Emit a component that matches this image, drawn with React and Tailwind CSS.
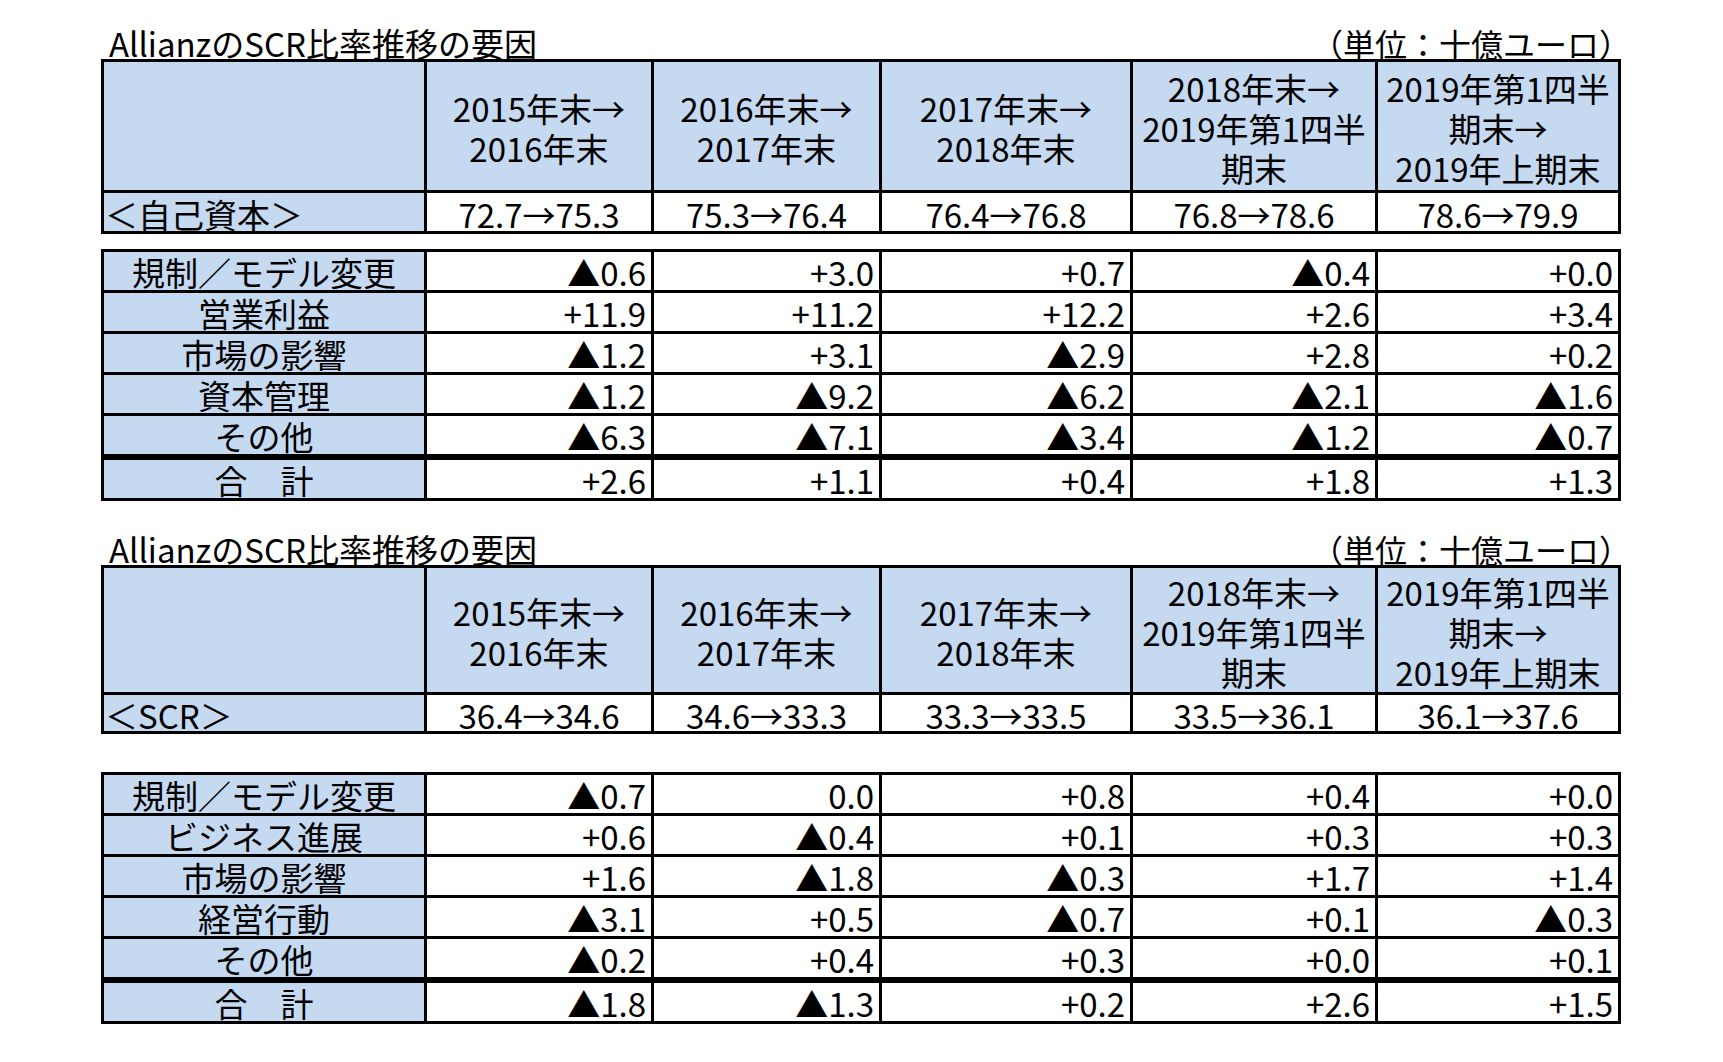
import React from "react";

const COLS =
  "grid grid-cols-[320px_224px_225px_248px_242px_240px] gap-[3px] bg-black p-[3px] w-[1520px]";
const BLUE = "bg-[#c5d9f1]";

const HEADERS = [
  ["2015年末→", "2016年末"],
  ["2016年末→", "2017年末"],
  ["2017年末→", "2018年末"],
  ["2018年末→", "2019年第1四半", "期末"],
  ["2019年第1四半", "期末→", "2019年上期末"],
];

const capital = {
  label: "＜自己資本＞",
  values: ["72.7→75.3", "75.3→76.4", "76.4→76.8", "76.8→78.6", "78.6→79.9"],
};

const scr = {
  label: "＜SCR＞",
  values: ["36.4→34.6", "34.6→33.3", "33.3→33.5", "33.5→36.1", "36.1→37.6"],
};

const capitalFactors = [
  ["規制／モデル変更", "▲0.6", "+3.0", "+0.7", "▲0.4", "+0.0"],
  ["営業利益", "+11.9", "+11.2", "+12.2", "+2.6", "+3.4"],
  ["市場の影響", "▲1.2", "+3.1", "▲2.9", "+2.8", "+0.2"],
  ["資本管理", "▲1.2", "▲9.2", "▲6.2", "▲2.1", "▲1.6"],
  ["その他", "▲6.3", "▲7.1", "▲3.4", "▲1.2", "▲0.7"],
  ["合　計", "+2.6", "+1.1", "+0.4", "+1.8", "+1.3"],
];

const scrFactors = [
  ["規制／モデル変更", "▲0.7", "0.0", "+0.8", "+0.4", "+0.0"],
  ["ビジネス進展", "+0.6", "▲0.4", "+0.1", "+0.3", "+0.3"],
  ["市場の影響", "+1.6", "▲1.8", "▲0.3", "+1.7", "+1.4"],
  ["経営行動", "▲3.1", "+0.5", "▲0.7", "+0.1", "▲0.3"],
  ["その他", "▲0.2", "+0.4", "+0.3", "+0.0", "+0.1"],
  ["合　計", "▲1.8", "▲1.3", "+0.2", "+2.6", "+1.5"],
];

const Title = () => (
  <div className="flex items-center justify-between w-[1520px] h-[32px] leading-[32px]">
    <span className="pl-[8px] text-[33px]">AllianzのSCR比率推移の要因</span>
    <span className="-mr-[10px] text-[32px]">（単位：十億ユーロ）</span>
  </div>
);

// header block + one summary row (自己資本 / SCR)
const HeadTable = ({ row, rows }) => (
  <div className={`${COLS} ${rows}`}>
    <div className={BLUE} />
    {HEADERS.map((lines, i) => (
      <div
        key={i}
        className={`${BLUE} flex flex-col items-center justify-center pt-[3px] text-[33px] leading-[40px] overflow-visible`}
      >
        {lines.map((l) => (
          <span key={l}>{l}</span>
        ))}
      </div>
    ))}
    <div className={`${BLUE} flex items-center pl-[1px] pt-[3px] text-[33px] leading-[34px]`}>
      {row.label}
    </div>
    {row.values.map((v, i) => (
      <div
        key={i}
        className="bg-white flex items-center justify-center pt-[3px] text-[33px] leading-[34px]"
      >
        {v}
      </div>
    ))}
  </div>
);

const FactorTable = ({ rows }) => (
  <div className={COLS}>
    {rows.map((r, ri) => {
      const total = ri === rows.length - 1;
      return r.map((cell, ci) => (
        <div
          key={`${ri}-${ci}`}
          className={`h-[38px] flex items-center text-[33px] leading-[34px] pt-[2px] ${
            total ? "mt-[3px]" : ""
          } ${
            ci === 0
              ? `${BLUE} justify-center`
              : "bg-white justify-end pr-[5px]"
          }`}
        >
          {cell}
        </div>
      ));
    })}
  </div>
);

export default function App() {
  return (
    <div className="w-[1723px] h-[1062px] bg-white text-black pl-[101px] pt-[27px] font-['Noto_Sans_CJK_JP',sans-serif]">
      <Title />
      <HeadTable row={capital} rows="grid-rows-[128px_38px]" />
      <div className="h-[15px]" />
      <FactorTable rows={capitalFactors} />
      <div className="h-[32px]" />
      <Title />
      <HeadTable row={scr} rows="grid-rows-[124px_36px]" />
      <div className="h-[38px]" />
      <FactorTable rows={scrFactors} />
    </div>
  );
}
